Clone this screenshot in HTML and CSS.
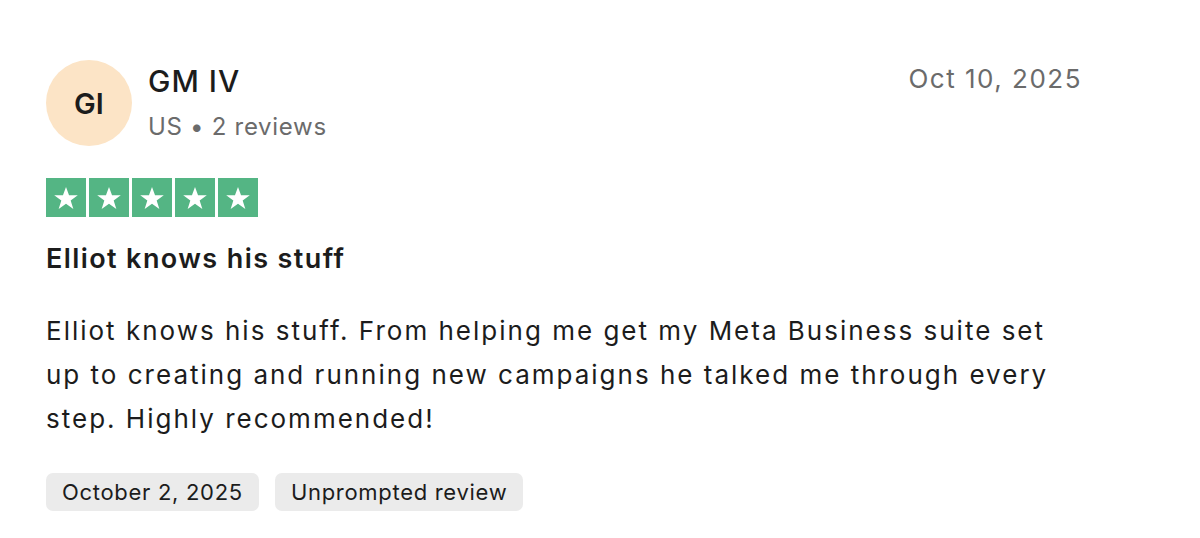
FILE: index.html
```html
<!DOCTYPE html>
<html lang="en">
<head>
<meta charset="utf-8">
<title>Review</title>
<link rel="stylesheet" href="styles.css">
</head>
<body>
<article class="review">
  <header class="review-header">
    <div class="consumer">
      <div class="avatar">GI</div>
      <div class="consumer-info">
        <div class="consumer-name">GM IV</div>
        <div class="consumer-meta">US <span class="dot">•</span> 2 reviews</div>
      </div>
    </div>
    <time class="review-date">Oct 10, 2025</time>
  </header>
  <div class="stars" aria-label="Rated 5 out of 5">
    <span class="star"><svg viewBox="0 0 24 24"><path d="M12 2.6l2.6 7.1h7.5l-6.1 4.5 2.3 7.2L12 16.9l-6.3 4.5 2.3-7.2-6.1-4.5h7.5z"/></svg></span>
    <span class="star"><svg viewBox="0 0 24 24"><path d="M12 2.6l2.6 7.1h7.5l-6.1 4.5 2.3 7.2L12 16.9l-6.3 4.5 2.3-7.2-6.1-4.5h7.5z"/></svg></span>
    <span class="star"><svg viewBox="0 0 24 24"><path d="M12 2.6l2.6 7.1h7.5l-6.1 4.5 2.3 7.2L12 16.9l-6.3 4.5 2.3-7.2-6.1-4.5h7.5z"/></svg></span>
    <span class="star"><svg viewBox="0 0 24 24"><path d="M12 2.6l2.6 7.1h7.5l-6.1 4.5 2.3 7.2L12 16.9l-6.3 4.5 2.3-7.2-6.1-4.5h7.5z"/></svg></span>
    <span class="star"><svg viewBox="0 0 24 24"><path d="M12 2.6l2.6 7.1h7.5l-6.1 4.5 2.3 7.2L12 16.9l-6.3 4.5 2.3-7.2-6.1-4.5h7.5z"/></svg></span>
  </div>
  <h2 class="review-title">Elliot knows his stuff</h2>
  <p class="review-text">Elliot knows his stuff. From helping me get my Meta Business suite set up to creating and running new campaigns he talked me through every step. Highly recommended!</p>
  <div class="tags">
    <span class="tag">October 2, 2025</span>
    <span class="tag">Unprompted review</span>
  </div>
</article>
</body>
</html>
```

FILE: styles.css
```css
* { box-sizing: border-box; }
html, body { margin: 0; background: #ffffff; }
body {
  font-family: Inter, "Noto Sans", sans-serif;
  color: #1c1c1c;
}
.review {
  width: 1036px;
  margin-left: 46px;
  padding-top: 60px;
}
.review-header {
  display: flex;
  justify-content: space-between;
  align-items: flex-start;
}
.consumer {
  display: flex;
  align-items: center;
  gap: 16px;
}
.avatar {
  width: 86px;
  height: 86px;
  border-radius: 50%;
  background: #fce4c6;
  display: flex;
  align-items: center;
  justify-content: center;
  font-size: 29px;
  font-weight: 600;
  color: #1c1c1c;
}
.consumer-info {
  display: flex;
  flex-direction: column;
  gap: 10px;
}
.consumer-name {
  font-size: 30px;
  font-weight: 500;
  line-height: 38px;
  letter-spacing: 1px;
}
.consumer-meta {
  font-size: 24px;
  line-height: 34px;
  letter-spacing: 0.7px;
  color: #6b6b6b;
}
.review-date {
  font-size: 26px;
  line-height: 38px;
  letter-spacing: 1.5px;
  color: #6b6b6b;
}
.stars {
  display: flex;
  gap: 3px;
  margin-top: 32px;
}
.star {
  width: 40px;
  height: 39px;
  background: #54b584;
  display: flex;
  align-items: center;
  justify-content: center;
}
.star svg {
  width: 28px;
  height: 28px;
  fill: #ffffff;
}
.review-title {
  margin: 24px 0 0;
  font-size: 27px;
  font-weight: 600;
  line-height: 36px;
  letter-spacing: 1.4px;
}
.review-text {
  margin: 32px 0 0;
  width: 1010px;
  font-size: 26px;
  line-height: 44px;
  letter-spacing: 2px;
  color: #1c1c1c;
}
.tags {
  display: flex;
  gap: 16px;
  margin-top: 32px;
}
.tag {
  background: #ebebeb;
  border-radius: 7px;
  padding: 0 16px;
  height: 38px;
  display: flex;
  align-items: center;
  font-size: 22px;
  letter-spacing: 0.7px;
  color: #1c1c1c;
}
```
